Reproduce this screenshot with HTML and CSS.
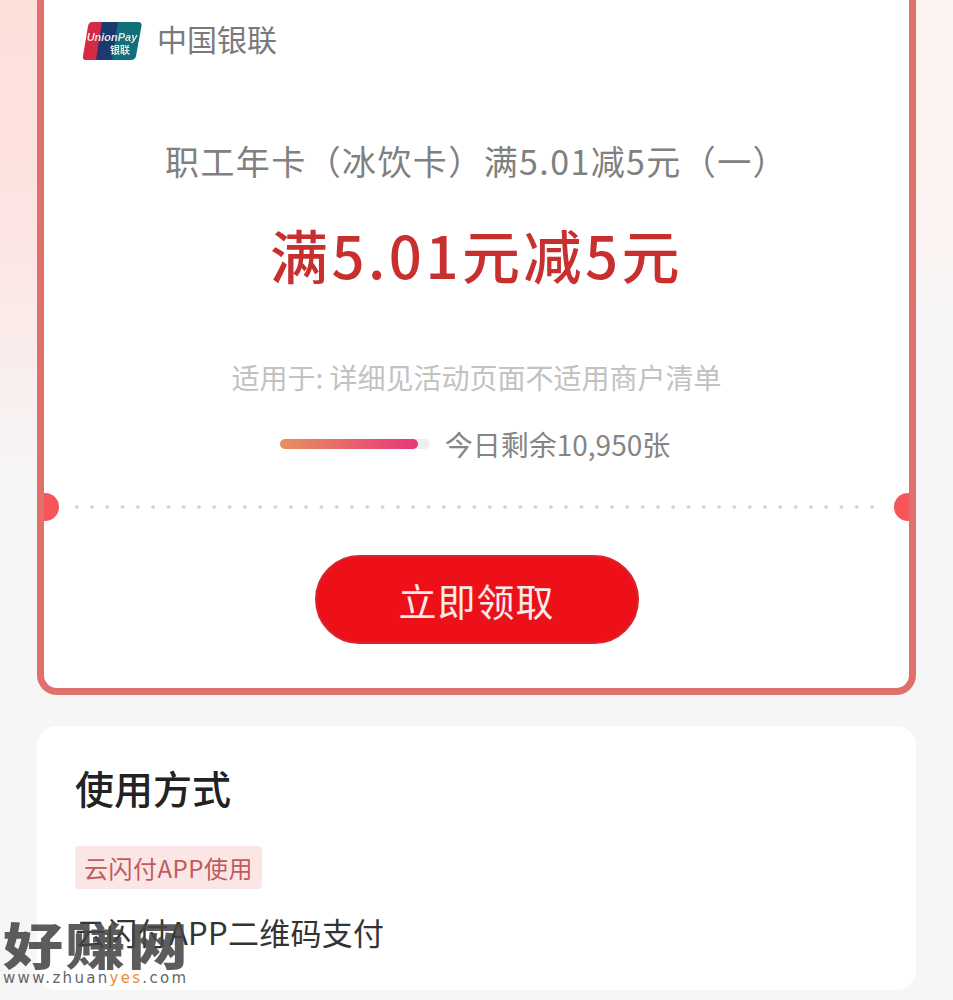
FILE: index.html
```html
<!DOCTYPE html>
<html lang="zh-CN">

<head>
  <meta charset="UTF-8" />
  <title>职工年卡</title>
  <link rel="stylesheet" href="styles.css">
</head>

<body>

  <div class="page">

    <div class="coupon">
      <div class="brand">
        <svg class="brand-logo" viewBox="0 0 60 38" width="60" height="38">
          <path d="M10 0H26L20 38H4Q0 38 1 34L6 4Q7 0 10 0Z" fill="#d42a45" />
          <path d="M20 0H42L36 38H14Z" fill="#1a3a70" />
          <path d="M36 0H56Q60 0 59.500 4L54 34Q53 38 49 38H30Z" fill="#0e7078" />
          <text x="30" y="19" class="logo-en">UnionPay</text>
          <text x="38" y="32" class="logo-cn">银联</text>
        </svg>
        <span class="brand-name">中国银联</span>
      </div>

      <div class="coupon-title">职工年卡（冰饮卡）满5.01减5元（一）</div>
      <div class="coupon-amount">满5.01元减5元</div>
      <div class="coupon-scope">适用于: 详细见活动页面不适用商户清单</div>

      <div class="stock">
        <div class="stock-bar">
          <div class="stock-fill"></div>
        </div>
        <span class="stock-text">今日剩余10,950张</span>
      </div>

      <div class="divider">
        <span class="notch notch-left"></span>
        <span class="notch notch-right"></span>
      </div>

      <div class="action">
        <button type="button" class="claim-btn">立即领取</button>
      </div>
    </div>

    <div class="usage">
      <h2 class="usage-title">使用方式</h2>
      <span class="usage-tag">云闪付APP使用</span>
      <p class="usage-desc">云闪付APP二维码支付</p>
    </div>

  </div>

  <div class="watermark">
    <div class="watermark-name">好赚网</div>
    <div class="watermark-url">www.zhuan<span class="watermark-hl">yes</span>.com</div>
  </div>

</body>

</html>
```

FILE: styles.css
```css
* {
  box-sizing: border-box;
}

html,
body {
  height: 1000px;
  overflow: hidden;
}

body {
  margin: 0;
  font-family: "Noto Sans CJK SC", "Noto Sans", sans-serif;
  background-color: #f6f6f6;
  background-image:
    linear-gradient(to bottom, #fde0da 0, #fde4e2 220px, #f6f6f6 480px),
    linear-gradient(to bottom, #fdf3f0 0, #fdf3f2 220px, #f6f6f8 340px);
  background-size: 50% 100%;
  background-position: left top, right top;
  background-repeat: no-repeat;
  position: relative;
}

.page {
  padding: 0 37px;
}

.coupon {
  height: 695px;
  background: #fff;
  border: 7px solid #e0706c;
  border-top: none;
  border-radius: 0 0 20px 20px;
  position: relative;
}

.brand {
  display: flex;
  align-items: flex-start;
  gap: 15px;
  padding: 22px 0 0 38px;
}

.brand-logo {
  display: block;
  filter: blur(0.5px);
}

.logo-en {
  font-family: "Liberation Sans", sans-serif;
  font-size: 11px;
  font-weight: bold;
  font-style: italic;
  fill: #f4dcdc;
  text-anchor: middle;
}

.logo-cn {
  font-size: 10px;
  font-weight: bold;
  fill: #e8e8e8;
  text-anchor: middle;
}

.brand-name {
  font-size: 30px;
  line-height: 32px;
  color: #7a7a7a;
}

.coupon-title {
  margin-top: 77px;
  text-align: center;
  font-size: 34px;
  line-height: 48px;
  letter-spacing: 1.400px;
  color: #808080;
}

.coupon-amount {
  margin-top: 31px;
  text-align: center;
  font-size: 58px;
  line-height: 76px;
  letter-spacing: 3.500px;
  font-weight: 500;
  color: #c8302f;
}

.coupon-scope {
  margin-top: 65px;
  text-align: center;
  font-size: 28px;
  line-height: 40px;
  color: #c2c2c2;
}

.stock {
  display: flex;
  align-items: center;
  justify-content: center;
  gap: 15px;
  margin-top: 27px;
  padding-right: 3px;
}

.stock-bar {
  width: 150px;
  height: 10px;
  border-radius: 5px;
  background: #eee;
}

.stock-fill {
  width: 138px;
  height: 10px;
  border-radius: 5px;
  background: linear-gradient(to right, #e5925e, #e8367a);
}

.stock-text {
  font-size: 28px;
  line-height: 40px;
  color: #858585;
}

.divider {
  margin-top: 41px;
  height: 4px;
  padding: 0 31px 0 25px;
  background-image: radial-gradient(circle, #d4d4d4 1.500px, transparent 2px);
  background-size: 15.300px 4px;
  background-origin: content-box;
  background-clip: content-box;
  position: relative;
}

.notch {
  position: absolute;
  top: -12px;
  width: 15px;
  height: 28px;
  background: #f8555a;
}

.notch-left {
  left: 0;
  border-radius: 0 14px 14px 0;
}

.notch-right {
  right: 0;
  border-radius: 14px 0 0 14px;
}

.action {
  display: flex;
  justify-content: center;
  margin-top: 46px;
}

.claim-btn {
  width: 324px;
  height: 89px;
  border: 2px solid #d8262c;
  border-radius: 45px;
  background: #ee1018;
  color: #fbeaea;
  font-family: inherit;
  font-size: 38px;
  letter-spacing: 1px;
}

.usage {
  height: 264px;
  margin-top: 31px;
  padding: 33px 38px 0;
  background: #fff;
  border-radius: 20px;
}

.usage-title {
  margin: 0;
  font-size: 39px;
  line-height: 56px;
  font-weight: 500;
  color: #222;
}

.usage-tag {
  display: inline-block;
  margin-top: 31px;
  padding: 0 9px;
  height: 43px;
  line-height: 43px;
  font-size: 24px;
  letter-spacing: 0.500px;
  color: #c4595c;
  background: #fbe6e6;
  border-radius: 4px;
}

.usage-desc {
  margin: 20px 0 0;
  font-size: 31px;
  line-height: 46px;
  letter-spacing: 0.300px;
  color: #333;
}

.watermark {
  position: absolute;
  left: 3px;
  top: 918px;
  width: 186px;
}

.watermark-name {
  font-size: 50px;
  line-height: 50px;
  font-weight: 900;
  letter-spacing: 2px;
  color: rgba(70, 70, 70, 0.88);
  white-space: nowrap;
  transform: scaleX(1.2);
  transform-origin: left center;
}

.watermark-url {
  font-family: "DejaVu Sans", sans-serif;
  font-size: 15px;
  line-height: 20px;
  letter-spacing: 2.300px;
  color: #666;
  white-space: nowrap;
}

.watermark-hl {
  color: #ef8a3c;
}
```
